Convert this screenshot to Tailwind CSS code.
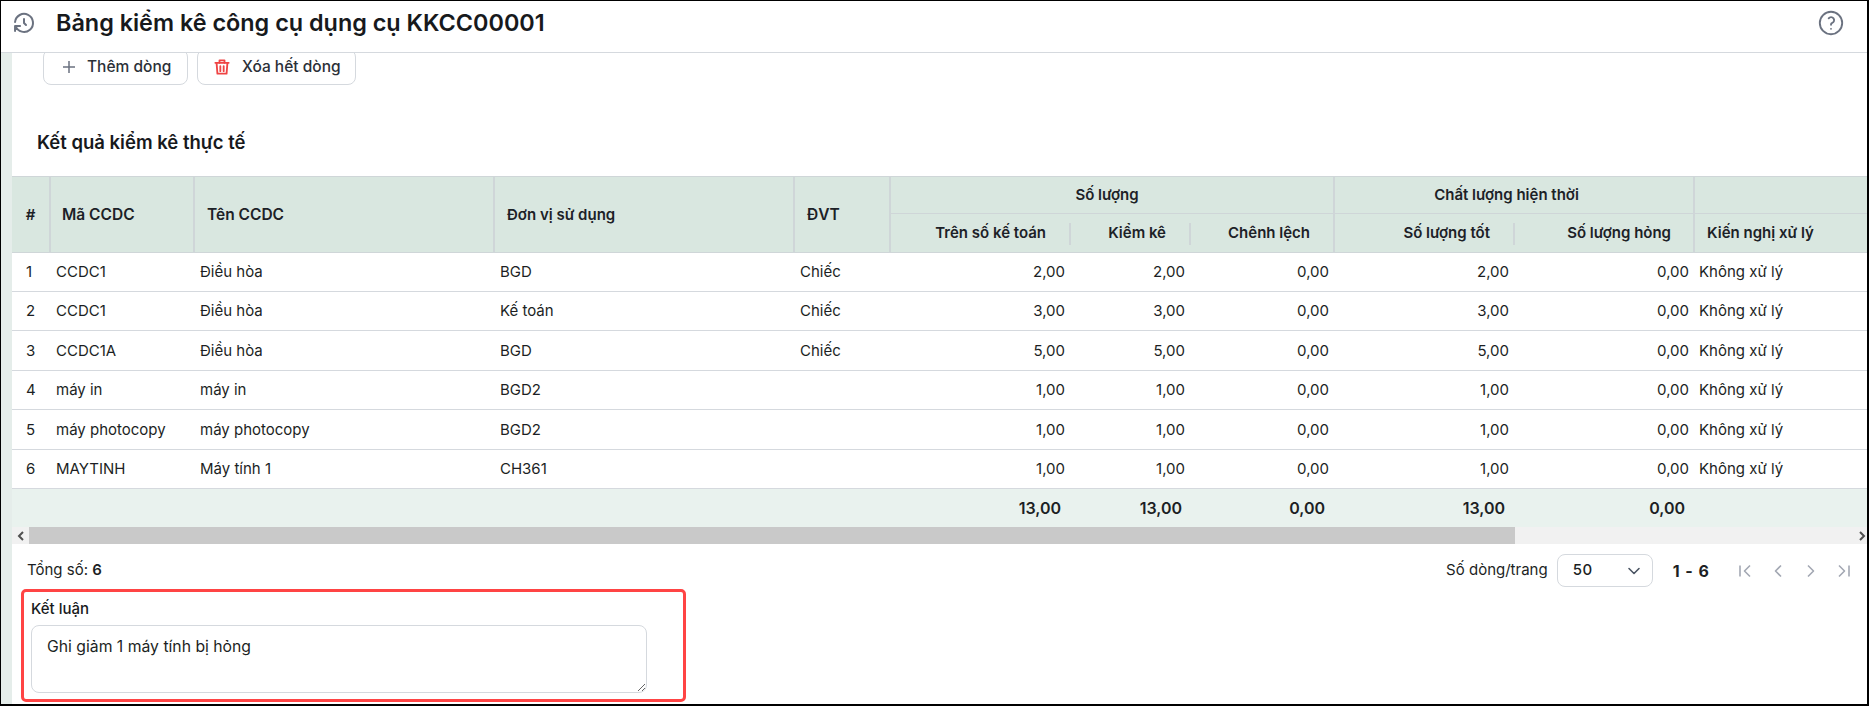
<!DOCTYPE html>
<html lang="en">
<head>
  <meta charset="UTF-8" />
  <title>Bảng kiểm kê công cụ dụng cụ</title>
  <script src="https://cdn.jsdelivr.net/npm/@tailwindcss/browser@4"></script>
</head>
<body class="bg-white font-['Inter',sans-serif] text-[#1c1f24] text-[15px]">
  <div class="w-[1869px] h-[706px] box-border border-l border-t border-r-2 border-b-2 border-black flex flex-col overflow-hidden bg-white">

    <!-- header -->
    <div class="h-[52px] shrink-0 border-b border-[#d5d9de] flex items-center pl-[11px] pr-[22px] pb-[8px]">
      <svg class="w-[24px] h-[24px] text-[#6b7280]" viewBox="0 0 24 24" fill="none" stroke="currentColor" stroke-width="2" stroke-linecap="round" stroke-linejoin="round"><path d="M12 8v4l2 2"/><path d="M3.05 11a9 9 0 1 1 .5 4m-.5 5v-5h5"/></svg>
      <h1 class="ml-[20px] text-[23.4px] leading-[32px] font-semibold text-[#17191c]">Bảng kiểm kê công cụ dụng cụ KKCC00001</h1>
      <svg class="ml-auto w-[28px] h-[28px] text-[#6b7280]" viewBox="0 0 24 24" fill="none" stroke="currentColor" stroke-width="1.6" stroke-linecap="round" stroke-linejoin="round"><circle cx="12" cy="12" r="9.6"/><path d="M12 17v.01"/><path d="M12 13.5a1.5 1.5 0 0 1 1-1.5a2.6 2.6 0 1 0-3-4"/></svg>
    </div>

    <div class="flex-1 flex min-h-0">
      <div class="w-[11px] shrink-0 bg-[#e5edea]"></div>

      <div class="w-[1855px] flex flex-col overflow-hidden">
        <!-- buttons -->
        <div class="flex gap-[9px] pl-[31px] mt-[-4px] shrink-0">
          <button class="h-[36px] w-[145px] border border-[#d5d9de] rounded-[8px] flex items-center pl-[17px] gap-[10px] text-[15.5px] font-medium text-[#2b3038]">
            <svg class="w-[16px] h-[16px] text-[#6b7280]" viewBox="0 0 16 16" fill="none" stroke="currentColor" stroke-width="1.5"><path d="M8 2v12M2 8h12"/></svg>
            Thêm dòng
          </button>
          <button class="h-[36px] w-[159px] border border-[#d5d9de] rounded-[8px] flex items-center pl-[14px] gap-[10px] text-[15.5px] font-medium text-[#2b3038]">
            <svg class="w-[20px] h-[20px] text-[#ef4444]" viewBox="0 0 24 24" fill="none" stroke="currentColor" stroke-width="2.2" stroke-linecap="round" stroke-linejoin="round"><path d="M4 7h16"/><path d="M10 11v6M14 11v6"/><path d="M5.5 7l1 13h11l1-13"/><path d="M9 7V4h6v3"/></svg>
            Xóa hết dòng
          </button>
        </div>

        <h2 class="mt-[45px] mb-[22px] pl-[25px] h-[24px] leading-[24px] text-[18.5px] font-semibold text-[#17191c] shrink-0">Kết quả kiểm kê thực tế</h2>

        <!-- table -->
        <table class="table-fixed w-[1855px] border-separate border-spacing-0 shrink-0">
          <colgroup>
            <col class="w-[39px]" /><col class="w-[144px]" /><col class="w-[300px]" /><col class="w-[300px]" /><col class="w-[96px]" />
            <col class="w-[180px]" /><col class="w-[120px]" /><col class="w-[144px]" /><col class="w-[180px]" /><col class="w-[180px]" /><col class="w-[172px]" />
          </colgroup>
          <thead class="bg-[#d9e7e0] text-[15px] text-[#1c2127]">
            <tr class="h-[38px]">
              <th rowspan="2" class="border-y border-r-2 border-[#cfd6d8] text-center pt-[1px] font-semibold">#</th>
              <th rowspan="2" class="border-y border-r-2 border-[#cfd6d8] text-left pl-[11px] pt-[1px] text-[15.5px] font-semibold">Mã CCDC</th>
              <th rowspan="2" class="border-y border-r-2 border-[#cfd6d8] text-left pl-[12px] pt-[1px] text-[15.5px] font-semibold">Tên CCDC</th>
              <th rowspan="2" class="border-y border-r-2 border-[#cfd6d8] text-left pl-[12px] pt-[1px] font-semibold">Đơn vị sử dụng</th>
              <th rowspan="2" class="border-y border-r-2 border-[#cfd6d8] text-left pl-[12px] pt-[1px] text-[15.5px] font-semibold">ĐVT</th>
              <th colspan="3" class="border-y border-r-2 border-[#cfd6d8] text-center pr-[10px] font-semibold">Số lượng</th>
              <th colspan="2" class="border-y border-r-2 border-[#cfd6d8] text-center pr-[15px] font-semibold">Chất lượng hiện thời</th>
              <th class="border-y border-[#cfd6d8]"></th>
            </tr>
            <tr class="h-[39px]">
              <th class="relative border-b border-[#cfd6d8] text-right pr-[25px] font-semibold after:absolute after:right-0 after:top-[9px] after:h-[22px] after:w-[2px] after:bg-[#cfd6d8]">Trên số kế toán</th>
              <th class="relative border-b border-[#cfd6d8] text-right pr-[25px] font-semibold after:absolute after:right-0 after:top-[9px] after:h-[22px] after:w-[2px] after:bg-[#cfd6d8]">Kiểm kê</th>
              <th class="border-b border-r-2 border-[#cfd6d8] text-right pr-[23px] font-semibold">Chênh lệch</th>
              <th class="relative border-b border-[#cfd6d8] text-right pr-[25px] font-semibold after:absolute after:right-0 after:top-[9px] after:h-[22px] after:w-[2px] after:bg-[#cfd6d8]">Số lượng tốt</th>
              <th class="border-b border-r-2 border-[#cfd6d8] text-right pr-[22px] font-semibold">Số lượng hỏng</th>
              <th class="border-b border-[#cfd6d8] text-left pl-[12px] font-semibold">Kiến nghị xử lý</th>
            </tr>
          </thead>
          <tbody class="text-[15px] [&_td]:border-b [&_td]:border-[#d5d9de]">
            <tr class="h-[39px]">
              <td class="pl-[14px]">1</td><td class="pl-[5px]">CCDC1</td><td class="pl-[5px]">Điều hòa</td><td class="pl-[5px]">BGD</td><td class="pl-[5px]">Chiếc</td>
              <td class="text-right pr-[6px]">2,00</td><td class="text-right pr-[6px]">2,00</td><td class="text-right pr-[6px]">0,00</td><td class="text-right pr-[6px]">2,00</td><td class="text-right pr-[6px]">0,00</td><td class="pl-[4px]">Không xử lý</td>
            </tr>
            <tr class="h-[39px] [&_td]:pt-[1px]">
              <td class="pl-[14px]">2</td><td class="pl-[5px]">CCDC1</td><td class="pl-[5px]">Điều hòa</td><td class="pl-[5px]">Kế toán</td><td class="pl-[5px]">Chiếc</td>
              <td class="text-right pr-[6px]">3,00</td><td class="text-right pr-[6px]">3,00</td><td class="text-right pr-[6px]">0,00</td><td class="text-right pr-[6px]">3,00</td><td class="text-right pr-[6px]">0,00</td><td class="pl-[4px]">Không xử lý</td>
            </tr>
            <tr class="h-[40px] [&_td]:pt-[1px]">
              <td class="pl-[14px]">3</td><td class="pl-[5px]">CCDC1A</td><td class="pl-[5px]">Điều hòa</td><td class="pl-[5px]">BGD</td><td class="pl-[5px]">Chiếc</td>
              <td class="text-right pr-[6px]">5,00</td><td class="text-right pr-[6px]">5,00</td><td class="text-right pr-[6px]">0,00</td><td class="text-right pr-[6px]">5,00</td><td class="text-right pr-[6px]">0,00</td><td class="pl-[4px]">Không xử lý</td>
            </tr>
            <tr class="h-[39px]">
              <td class="pl-[14px]">4</td><td class="pl-[5px]">máy in</td><td class="pl-[5px]">máy in</td><td class="pl-[5px]">BGD2</td><td class="pl-[5px]"></td>
              <td class="text-right pr-[6px]">1,00</td><td class="text-right pr-[6px]">1,00</td><td class="text-right pr-[6px]">0,00</td><td class="text-right pr-[6px]">1,00</td><td class="text-right pr-[6px]">0,00</td><td class="pl-[4px]">Không xử lý</td>
            </tr>
            <tr class="h-[40px] [&_td]:pt-[1px]">
              <td class="pl-[14px]">5</td><td class="pl-[5px]">máy photocopy</td><td class="pl-[5px]">máy photocopy</td><td class="pl-[5px]">BGD2</td><td class="pl-[5px]"></td>
              <td class="text-right pr-[6px]">1,00</td><td class="text-right pr-[6px]">1,00</td><td class="text-right pr-[6px]">0,00</td><td class="text-right pr-[6px]">1,00</td><td class="text-right pr-[6px]">0,00</td><td class="pl-[4px]">Không xử lý</td>
            </tr>
            <tr class="h-[39px]">
              <td class="pl-[14px]">6</td><td class="pl-[5px]">MAYTINH</td><td class="pl-[5px]">Máy tính 1</td><td class="pl-[5px]">CH361</td><td class="pl-[5px]"></td>
              <td class="text-right pr-[6px]">1,00</td><td class="text-right pr-[6px]">1,00</td><td class="text-right pr-[6px]">0,00</td><td class="text-right pr-[6px]">1,00</td><td class="text-right pr-[6px]">0,00</td><td class="pl-[4px]">Không xử lý</td>
            </tr>
          </tbody>
          <tfoot class="bg-[#e9f2ee] text-[16px] font-semibold">
            <tr class="h-[38px]">
              <td colspan="5"></td>
              <td class="text-right pr-[10px]">13,00</td><td class="text-right pr-[9px]">13,00</td><td class="text-right pr-[10px]">0,00</td><td class="text-right pr-[10px]">13,00</td><td class="text-right pr-[10px]">0,00</td><td></td>
            </tr>
          </tfoot>
        </table>

        <!-- scrollbar -->
        <div class="h-[17px] shrink-0 flex items-center bg-[#f1f1f1]">
          <div class="w-[17px] flex justify-center">
            <svg class="w-[8px] h-[10px] text-[#505050]" viewBox="0 0 8 10" fill="none" stroke="currentColor" stroke-width="2"><path d="M6 1L2 5l4 4"/></svg>
          </div>
          <div class="w-[1486px] h-full bg-[#c9c9c9]"></div>
          <div class="flex-1 flex justify-end pr-[1px]">
            <svg class="w-[8px] h-[10px] text-[#505050]" viewBox="0 0 8 10" fill="none" stroke="currentColor" stroke-width="2"><path d="M2 1l4 4-4 4"/></svg>
          </div>
        </div>

        <!-- pagination -->
        <div class="mt-[10px] h-[33px] shrink-0 flex items-center pl-[15px]">
          <span>Tổng số: <b class="font-semibold">6</b></span>
          <span class="ml-auto">Số dòng/trang</span>
          <div class="ml-[9px] w-[96px] h-[33px] border border-[#d5d9de] rounded-[8px] flex items-center justify-between pl-[15px] pr-[10px]">
            <span class="font-medium tracking-[0.5px]">50</span>
            <svg class="w-[16px] h-[16px] text-[#4b5563]" viewBox="0 0 16 16" fill="none" stroke="currentColor" stroke-width="1.6" stroke-linecap="round" stroke-linejoin="round"><path d="M3 5.500l5 5 5-5"/></svg>
          </div>
          <span class="ml-[20px] text-[16px] font-bold tracking-[1px]">1 - 6</span>
          <div class="ml-[25px] mr-[13px] flex gap-[13px] text-[#a3a8b3]">
            <svg class="w-[20px] h-[20px]" viewBox="0 0 20 20" fill="none" stroke="currentColor" stroke-width="1.6" stroke-linejoin="round"><path d="M5 4.500v11"/><path d="M15 4.500L9.500 10l5.500 5.500"/></svg>
            <svg class="w-[20px] h-[20px]" viewBox="0 0 20 20" fill="none" stroke="currentColor" stroke-width="1.6" stroke-linejoin="round"><path d="M13 4.500L7.500 10l5.500 5.500"/></svg>
            <svg class="w-[20px] h-[20px]" viewBox="0 0 20 20" fill="none" stroke="currentColor" stroke-width="1.6" stroke-linejoin="round"><path d="M7 4.500l5.500 5.500L7 15.500"/></svg>
            <svg class="w-[20px] h-[20px]" viewBox="0 0 20 20" fill="none" stroke="currentColor" stroke-width="1.6" stroke-linejoin="round"><path d="M15 4.500v11"/><path d="M5 4.500l5.500 5.500L5 15.500"/></svg>
          </div>
        </div>

        <!-- conclusion, red highlight -->
        <div class="mt-[2px] ml-[9px] w-[665px] h-[113px] box-border border-[3px] border-[#ff4444] rounded-[5px] pl-[7px] pt-[7px] shrink-0">
          <label class="block h-[20px] leading-[20px] text-[15px] font-medium text-[#17191c]">Kết luận</label>
          <textarea class="block mt-[6px] w-[616px] h-[68px] border border-[#d5d9de] rounded-[8px] px-[15px] py-[11px] text-[15.75px] leading-[20px] text-[#1c1f24] outline-none">Ghi giảm 1 máy tính bị hỏng</textarea>
        </div>
      </div>
    </div>
  </div>
</body>
</html>
